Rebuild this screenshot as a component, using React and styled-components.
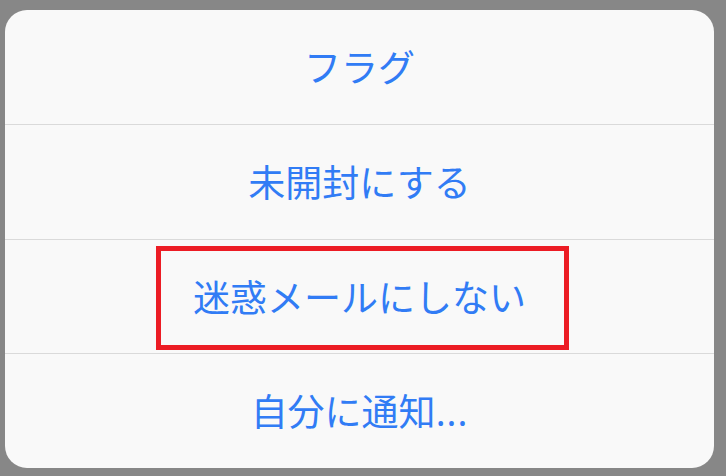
import React from 'react';
import styled, { createGlobalStyle } from 'styled-components';

const GlobalStyle = createGlobalStyle`
  html, body {
    margin: 0;
    padding: 0;
    background: #878787;
  }
  body {
    font-family: "Noto Sans CJK JP", "Noto Sans", sans-serif;
  }
`;

const Screen = styled.div`
  width: 726px;
  height: 476px;
  box-sizing: border-box;
  padding: 10px 12px 8px 5px;
  background: #878787;
`;

const Sheet = styled.div`
  height: 100%;
  display: flex;
  flex-direction: column;
  background: #f9f9f9;
  border-radius: 22px;
  overflow: hidden;
`;

const Row = styled.div`
  position: relative;
  flex: 1;
  display: flex;
  align-items: center;
  justify-content: center;
  border-top: ${(p) => (p.$first ? 'none' : '1px solid #dadada')};
`;

const Label = styled.span`
  font-size: 37px;
  line-height: 1;
  color: #317cf5;
`;

const Dots = styled.span`
  font-family: "Noto Sans", sans-serif;
  letter-spacing: 1px;
`;

const Highlight = styled.div`
  position: absolute;
  left: 151px;
  top: 6px;
  width: 413px;
  height: 104px;
  box-sizing: border-box;
  border: 5px solid #ec1c24;
  pointer-events: none;
`;

const items = [
  { label: 'フラグ' },
  { label: '未開封にする' },
  { label: '迷惑メールにしない', marked: true },
  { label: '自分に通知', more: true },
];

export default function App() {
  return (
    <>
      <GlobalStyle />
      <Screen>
        <Sheet>
          {items.map((item, i) => (
            <Row key={item.label} $first={i === 0}>
              <Label>
                {item.label}
                {item.more && <Dots>...</Dots>}
              </Label>
              {item.marked && <Highlight />}
            </Row>
          ))}
        </Sheet>
      </Screen>
    </>
  );
}
